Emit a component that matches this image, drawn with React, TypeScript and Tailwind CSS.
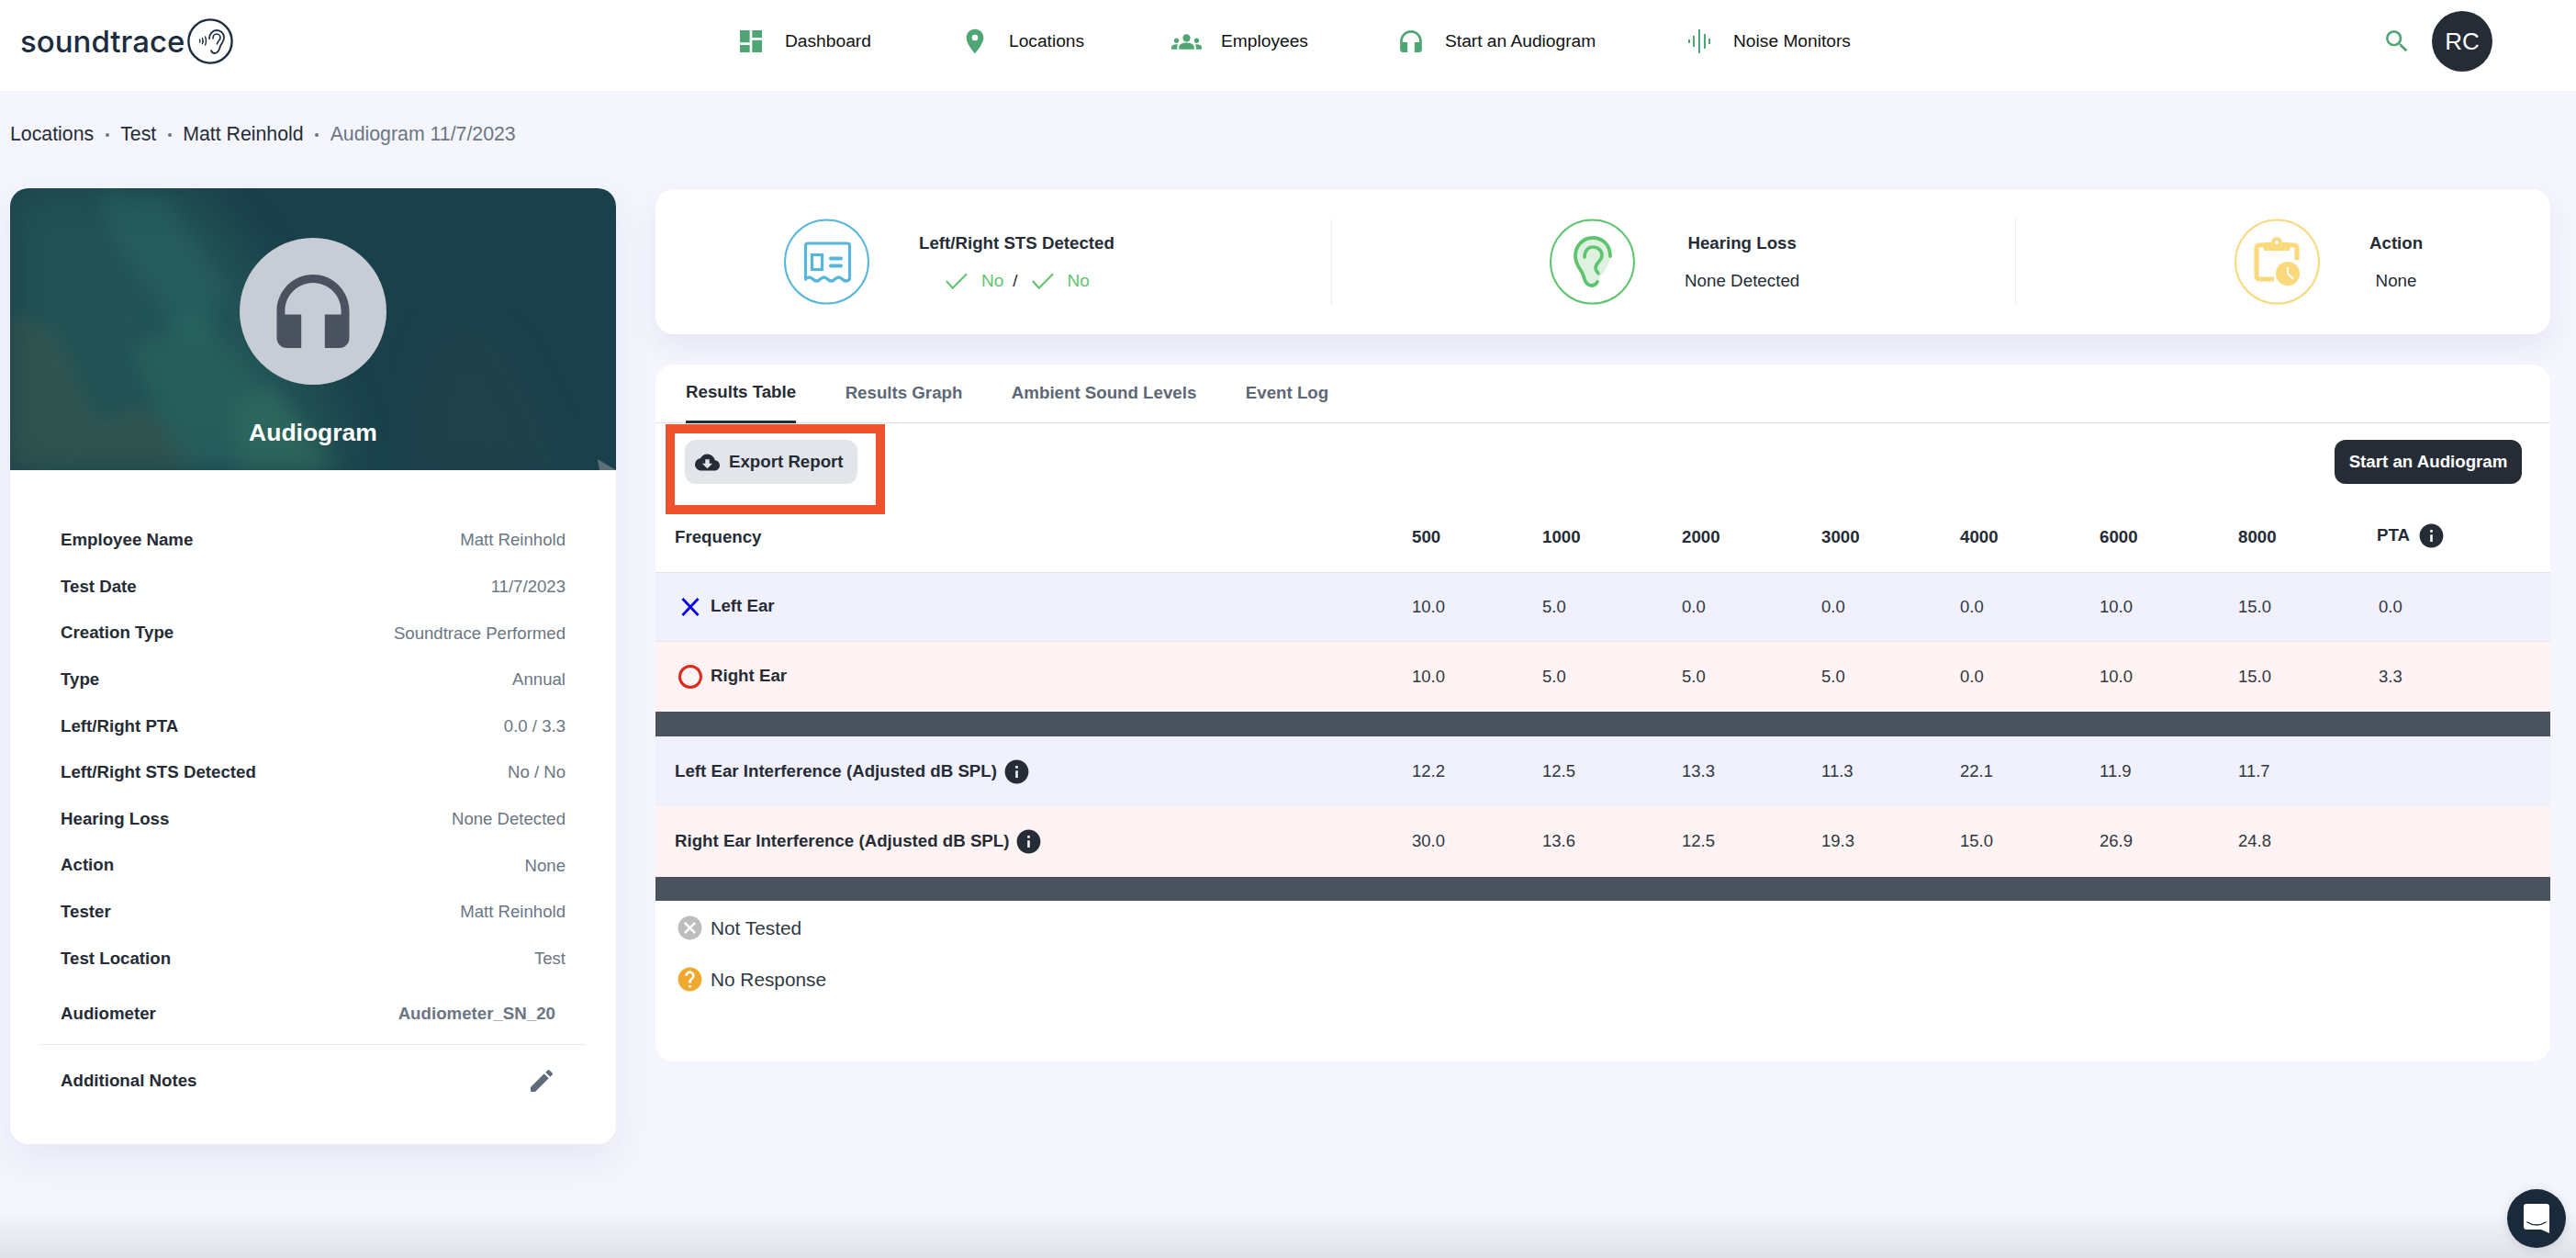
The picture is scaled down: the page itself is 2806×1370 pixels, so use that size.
import { MdDashboard, MdPlace, MdGroups, MdSearch, MdEdit, MdCloudDownload, MdInfo, MdCancel, MdHelp } from "react-icons/md";

function HeadsetIcon({ size, className }: { size: number; className?: string }) {
  return (
    <svg width={size} height={size} viewBox="0 0 80 81" fill="currentColor" className={className}>
      <path d="M40 0C18 0 0 18 0 40V70A11 11 0 0 0 11 81H27V44H9V40C9 23 23 9 40 9C57 9 71 23 71 40V44H53V81H69A11 11 0 0 0 80 70V40C80 18 62 0 40 0Z" />
    </svg>
  );
}

const navItems = [
  { label: "Dashboard", icon: <MdDashboard size={32} />, width: "w-[244px]" },
  { label: "Locations", icon: <MdPlace size={32} />, width: "w-[230px]" },
  { label: "Employees", icon: <MdGroups size={33} />, width: "w-[245px]" },
  { label: "Start an Audiogram", icon: <span className="block px-[4px]"><HeadsetIcon size={24} /></span>, width: "w-[318px]" },
];

const details = [
  ["Employee Name", "Matt Reinhold"],
  ["Test Date", "11/7/2023"],
  ["Creation Type", "Soundtrace Performed"],
  ["Type", "Annual"],
  ["Left/Right PTA", "0.0 / 3.3"],
  ["Left/Right STS Detected", "No / No"],
  ["Hearing Loss", "None Detected"],
  ["Action", "None"],
  ["Tester", "Matt Reinhold"],
  ["Test Location", "Test"],
];

const cols = "grid grid-cols-[802px_142px_152px_152px_151px_152px_151px_153px_1fr] items-center";

function Logo() {
  return (
    <div className="flex w-[780px] items-center text-[#1b2d3e]">
      <span className="w-[180px] font-['Inter',sans-serif] text-[33px] leading-none font-medium">soundtrace</span>
      <svg width="50" height="50" viewBox="0 0 50 50" fill="none" stroke="currentColor" className="ml-[2px]">
        <circle cx="25" cy="25" r="23.6" strokeWidth="2.4" />
        <path d="M24 22c0-5 3.500-9 8-9 5 0 8 3.500 8 8 0 4-2.500 6-4 9-1 3-1.500 8-6 8-2 0-3.500-1-4-3" strokeWidth="1.8" strokeLinecap="round" />
        <path d="M28 22c0-3 1.800-5 4-5 2.500 0 4 2 4 4 0 3-3.500 4-3.500 7" strokeWidth="1.6" strokeLinecap="round" />
        <path d="M19.500 20c1.300 2.800 1.300 6 0 9M16.500 21.500c.9 2 .9 4 0 6M13.500 23c.5 1 .5 2 0 3" strokeWidth="1.4" strokeLinecap="round" />
      </svg>
    </div>
  );
}

function NoiseIcon() {
  return (
    <svg width="24" height="26" viewBox="0 0 24 26" fill="none" stroke="#4fa674" strokeWidth="2">
      <path d="M1 11v4M6 7v12M12 0v26M18 5v16M23 10v6" />
    </svg>
  );
}

function Header() {
  return (
    <header className="flex h-[99px] items-center bg-white pb-[9px] pl-[22px] pr-[91px]">
      <Logo />
      {navItems.map((n) => (
        <div key={n.label} className={`flex items-center gap-[21px] ${n.width}`}>
          <span className="text-[#4fa674]">{n.icon}</span>
          <span className="text-[19.2px] text-[#111]">{n.label}</span>
        </div>
      ))}
      <div className="flex items-center gap-[25px]">
        <NoiseIcon />
        <span className="text-[19.2px] text-[#111]">Noise Monitors</span>
      </div>
      <div className="ml-auto flex items-center gap-[22px]">
        <MdSearch size={32} className="text-[#4fa674]" />
        <div className="flex h-[66px] w-[66px] items-center justify-center rounded-full bg-[#252c36] text-[26px] text-white">RC</div>
      </div>
    </header>
  );
}

function Breadcrumb() {
  return (
    <nav className="flex h-[96px] items-center gap-[12.5px] pl-[11px] text-[21.3px] text-[#252c36]">
      <span>Locations</span>
      <span className="h-[4px] w-[4px] rounded-full bg-[#6b7684]" />
      <span>Test</span>
      <span className="h-[4px] w-[4px] rounded-full bg-[#6b7684]" />
      <span>Matt Reinhold</span>
      <span className="h-[4px] w-[4px] rounded-full bg-[#6b7684]" />
      <span className="text-[#6b7684]">Audiogram 11/7/2023</span>
    </nav>
  );
}

function HeroArt() {
  return (
    <svg className="absolute inset-0 h-full w-full" viewBox="0 0 660 307" preserveAspectRatio="none">
      <defs>
        <filter id="b3"><feGaussianBlur stdDeviation="3" /></filter>
        <filter id="b10"><feGaussianBlur stdDeviation="10" /></filter>
        <filter id="b24"><feGaussianBlur stdDeviation="24" /></filter>
      </defs>
      <path d="M0 0L200 0L300 130L380 307L0 307Z" fill="#2a6461" opacity=".5" filter="url(#b24)" />
      <path d="M90 0L170 10L235 110L200 180L120 70Z" fill="#2f7570" opacity=".28" filter="url(#b10)" />
      <path d="M130 175L205 135L300 235L345 307L190 307Z" fill="#2f7469" opacity=".35" filter="url(#b10)" />
      <path d="M0 135L50 155L95 255L150 235L200 307L0 307Z" fill="#4f5a45" opacity=".3" filter="url(#b10)" />
      <path d="M470 150L530 170L600 307L430 307Z" fill="#3f3f47" opacity=".18" filter="url(#b24)" />
      <path d="M240 235L285 218L365 307L250 307Z" fill="#3f7d5b" opacity=".25" filter="url(#b10)" />
      <path d="M130 20C160 40 200 90 215 130M40 200C90 150 150 120 200 150M60 307C90 260 130 240 170 240M480 130C530 170 560 240 590 307" fill="none" stroke="#3f8c84" strokeWidth="1" opacity=".3" filter="url(#b3)" />
      <path d="M640 295L660 307L642 307Z" fill="#5a7075" />
    </svg>
  );
}

function ProfileCard() {
  return (
    <aside className="h-[1041px] w-[660px] overflow-hidden rounded-[20px] bg-white shadow-[0_16px_40px_rgba(60,70,120,0.08)]">
      <div className="relative flex h-[307px] flex-col items-center overflow-hidden bg-[#1a414b]">
        <HeroArt />
        <div className="relative mt-[54px] flex h-[160px] w-[160px] items-center justify-center rounded-full bg-[#c7cdd5]">
          <HeadsetIcon size={80} className="text-[#4a5260]" />
        </div>
        <p className="relative mt-[36px] text-[26.5px] leading-[32px] font-bold text-white">Audiogram</p>
      </div>
      <div className="px-[55px] pt-[51px]">
        {details.map(([k, v]) => (
          <div key={k} className="flex h-[50.6px] items-center justify-between">
            <span className="text-[18.7px] font-bold text-[#252c36]">{k}</span>
            <span className="text-[18.6px] text-[#6b7684]">{v}</span>
          </div>
        ))}
        <div className="mt-[10px] flex h-[50px] items-center justify-between pr-[11px]">
          <span className="text-[18.7px] font-bold text-[#252c36]">Audiometer</span>
          <span className="text-[18.7px] font-bold text-[#6b7684]">Audiometer_SN_20</span>
        </div>
      </div>
      <div className="mx-[33px] mt-[8px] border-t border-[#e6e8ec]" />
      <div className="flex h-[78px] items-center justify-between px-[55px] pr-[65px]">
        <span className="text-[18.7px] font-bold text-[#252c36]">Additional Notes</span>
        <MdEdit size={32} className="text-[#5f6b7a]" />
      </div>
    </aside>
  );
}

function Check() {
  return (
    <svg width="25" height="18" viewBox="0 0 26 18" fill="none" stroke="#5fc46f" strokeWidth="2.2">
      <path d="M1 9l7 8L24 1" />
    </svg>
  );
}

function ReceiptIcon() {
  return (
    <svg width="93" height="94" viewBox="0 0 93 94" fill="none" stroke="#56b7da">
      <circle cx="46.500" cy="47" r="45.500" strokeWidth="2" />
      <path d="M26 27H69a2.500 2.500 0 0 1 2.500 2.500V66q-4 4-8 0t-8 0t-8 0t-8 0t-8 0t-8 0V29.500A2.500 2.500 0 0 1 26 27Z" strokeWidth="3.200" strokeLinejoin="round" />
      <rect x="30.500" y="39.500" width="11" height="16" strokeWidth="3.200" />
      <path d="M51 43.500h11M51 51.500h11" strokeWidth="4" strokeLinecap="round" />
    </svg>
  );
}

function EarIcon() {
  return (
    <svg width="93" height="94" viewBox="0 0 93 94" fill="none" stroke="#5fc46f">
      <circle cx="46.500" cy="47" r="45.500" strokeWidth="2" />
      <path d="M47 21C57 21 66 28 66 40C66 52 56 60 53 68C52 71 49 73 46 73C39 73 38 66 36 60C33 54 28 50 28 41C28 30 36 21 47 21Z" fill="#dff2e1" stroke="none" />
      <path d="M66 41C66 28 57 21 47 21C36 21 28 30 28 41C28 50 33 54 36 60C38 66 39 73 46 73C49 73 51 71 52 69" strokeWidth="3.800" strokeLinecap="round" />
      <path d="M38 42C38 35 42 31 47 31C53 31 57 35 57 40C57 46 50 48 50 54C50 58 53 58 53 60" strokeWidth="3.600" strokeLinecap="round" />
    </svg>
  );
}

function ClipboardIcon() {
  return (
    <svg width="93" height="94" viewBox="0 0 93 94" fill="none" stroke="#fad87c">
      <circle cx="46.500" cy="47" r="45.500" strokeWidth="2" />
      <path d="M32 29H27a3 3 0 0 0-3 3V63a3 3 0 0 0 3 3H43M60 29H65a3 3 0 0 1 3 3V45" strokeWidth="5" />
      <path d="M32 26H40a6 6 0 0 1 12 0H60V35H32Z" fill="#fad87c" stroke="none" />
      <circle cx="46" cy="26" r="2" fill="white" stroke="none" />
      <circle cx="58" cy="60" r="13" fill="#fad87c" stroke="none" />
      <path d="M58 53V60L64 66" stroke="white" strokeWidth="1.800" />
    </svg>
  );
}

function StatCard() {
  return (
    <section className="mt-px grid h-[158px] grid-cols-[737px_745px_1fr] items-center rounded-[20px] bg-white shadow-[0_14px_30px_rgba(60,70,120,0.08)]">
      <div className="flex h-[94px] items-center gap-[54px] border-r border-[#eceef1] pl-[140px]">
        <ReceiptIcon />
        <div className="flex flex-col items-center gap-[19px]">
          <p className="text-[18.7px] leading-[22px] font-bold text-[#252c36]">Left/Right STS Detected</p>
          <div className="flex items-center pl-[2px] text-[19px] leading-[22px] text-[#5fc46f]">
            <Check />
            <span className="ml-[14px]">No</span>
            <span className="ml-[10px] mr-[15px] text-[#252c36]">/</span>
            <Check />
            <span className="ml-[14px]">No</span>
          </div>
        </div>
      </div>
      <div className="flex h-[94px] items-center gap-[54px] border-r border-[#eceef1] pl-[237px]">
        <EarIcon />
        <div className="flex flex-col items-center gap-[19px]">
          <p className="text-[18.7px] leading-[22px] font-bold text-[#252c36]">Hearing Loss</p>
          <p className="text-[18.8px] leading-[22px] text-[#252c36]">None Detected</p>
        </div>
      </div>
      <div className="flex h-[94px] items-center gap-[54px] pl-[238px]">
        <ClipboardIcon />
        <div className="flex flex-col items-center gap-[19px]">
          <p className="text-[18.7px] leading-[22px] font-bold text-[#252c36]">Action</p>
          <p className="text-[18.8px] leading-[22px] text-[#252c36]">None</p>
        </div>
      </div>
    </section>
  );
}

function Info() {
  return <MdInfo size={31} className="text-[#252c36]" />;
}

function Values({ v }: { v: string[] }) {
  return (
    <>
      {v.map((x, i) => (
        <span key={i} className="pl-[22px] text-[18.500px] text-[#2f3742]">{x}</span>
      ))}
    </>
  );
}

function ResultsCard() {
  const tabs = ["Results Graph", "Ambient Sound Levels", "Event Log"];
  const freq = ["500", "1000", "2000", "3000", "4000", "6000", "8000"];
  return (
    <section className="mt-[33px] h-[759px] overflow-hidden rounded-[20px] bg-white">
      <div className="flex h-[64px] items-stretch gap-[53.5px] border-b border-[#dfe1e5] pl-[33px]">
        <div className="-mb-px flex items-center border-b-[3px] border-[#252c36] text-[18.7px] font-bold text-[#252c36]">Results Table</div>
        {tabs.map((t) => (
          <div key={t} className="flex items-center text-[18.7px] font-bold text-[#5d6877]">{t}</div>
        ))}
      </div>

      <div className="relative flex h-[87px] items-start justify-between pl-[32px] pr-[31px] pt-[18px]">
        <button className="flex h-[48px] w-[188px] items-center gap-[10px] rounded-[12px] bg-[#e2e5e9] pl-[11px] text-[18.7px] font-bold text-[#252c36]">
          <MdCloudDownload size={27} />
          Export Report
        </button>
        <button className="h-[48px] w-[204px] rounded-[12px] bg-[#252c36] text-[18.7px] font-bold text-white">Start an Audiogram</button>
        <div className="absolute left-[11px] top-px z-10 h-[98px] w-[239px] border-[10px] border-[#ee532e]" />
      </div>

      <div className={`${cols} h-[76px] border-b border-[#e2e3ec] text-[18.7px] font-bold text-[#252c36]`}>
        <span className="pl-[21px]">Frequency</span>
        {freq.map((f) => (
          <span key={f} className="pl-[22px]">{f}</span>
        ))}
        <span className="-mt-[4px] flex items-center gap-[8px] pl-[20px]">PTA <Info /></span>
      </div>

      <div className={`${cols} h-[75px] border-b border-[#e2e3ec] bg-[#f1f1fd]`}>
        <span className="flex items-center pl-[28px] text-[18.7px] font-bold text-[#252c36]">
          <svg width="20" height="20" viewBox="0 0 20 20" stroke="#0000e6" strokeWidth="2.800"><path d="M1.500 1l17 18M18.500 1l-17 18" /></svg>
          <span className="ml-[12px] -mt-[2px]">Left Ear</span>
        </span>
        <Values v={["10.0", "5.0", "0.0", "0.0", "0.0", "10.0", "15.0", "0.0"]} />
      </div>
      <div className={`${cols} h-[76px] bg-[#fff4f3]`}>
        <span className="flex items-center pl-[25px] text-[18.7px] font-bold text-[#252c36]">
          <span className="h-[26px] w-[26px] rounded-full border-[3px] border-[#e3261c]" />
          <span className="ml-[9px] -mt-[2px]">Right Ear</span>
        </span>
        <Values v={["10.0", "5.0", "5.0", "5.0", "0.0", "10.0", "15.0", "3.3"]} />
      </div>
      <div className="h-[27px] bg-[#4a525e]" />

      <div className={`${cols} h-[76px] bg-[#f1f1fd]`}>
        <span className="flex items-center gap-[6px] pl-[21px] text-[18.7px] font-bold text-[#252c36]">Left Ear Interference (Adjusted dB SPL) <Info /></span>
        <Values v={["12.2", "12.5", "13.3", "11.3", "22.1", "11.9", "11.7", ""]} />
      </div>
      <div className={`${cols} h-[76.500px] bg-[#fff4f3]`}>
        <span className="flex items-center gap-[6px] pl-[21px] text-[18.7px] font-bold text-[#252c36]">Right Ear Interference (Adjusted dB SPL) <Info /></span>
        <Values v={["30.0", "13.6", "12.5", "19.3", "15.0", "26.9", "24.8", ""]} />
      </div>
      <div className="h-[26.500px] bg-[#4a525e]" />

      <div className="flex flex-col gap-[25px] pl-[22px] pt-[14px] text-[20.8px] text-[#2f3742]">
        <div className="flex h-[31px] items-center gap-[7px]"><MdCancel size={31} className="text-[#bdbdbd]" />Not Tested</div>
        <div className="flex h-[31px] items-center gap-[7px]"><MdHelp size={31} className="text-[#f0a92f]" />No Response</div>
      </div>
    </section>
  );
}

function ChatBubble() {
  return (
    <div className="absolute bottom-[11px] right-[11px] z-20 flex h-[64px] w-[64px] items-center justify-center rounded-full bg-[#1a2a3a] shadow-[0_1px_12px_rgba(0,0,0,0.12)]">
      <svg width="28" height="32" viewBox="0 0 28 32">
        <path d="M3 0H25a3 3 0 0 1 3 3V32L19 28H3a3 3 0 0 1-3-3V3a3 3 0 0 1 3-3Z" fill="white" />
        <path d="M4 20c6 4 14 4 20 0" fill="none" stroke="#1a2a3a" strokeWidth="1.500" strokeLinecap="round" />
      </svg>
    </div>
  );
}

export default function App() {
  return (
    <div className="relative h-[1370px] w-[2806px] overflow-hidden bg-[#f4f5fd] font-['Liberation_Sans',Arial,sans-serif]">
      <Header />
      <Breadcrumb />
      <main className="relative z-10 flex gap-[43px] pl-[11px] pt-[10px]">
        <ProfileCard />
        <div className="w-[2064px]">
          <StatCard />
          <ResultsCard />
        </div>
      </main>
      <div className="absolute inset-x-0 bottom-0 h-[50px] bg-linear-to-b from-transparent to-[#dfe1e8]" />
      <ChatBubble />
    </div>
  );
}
